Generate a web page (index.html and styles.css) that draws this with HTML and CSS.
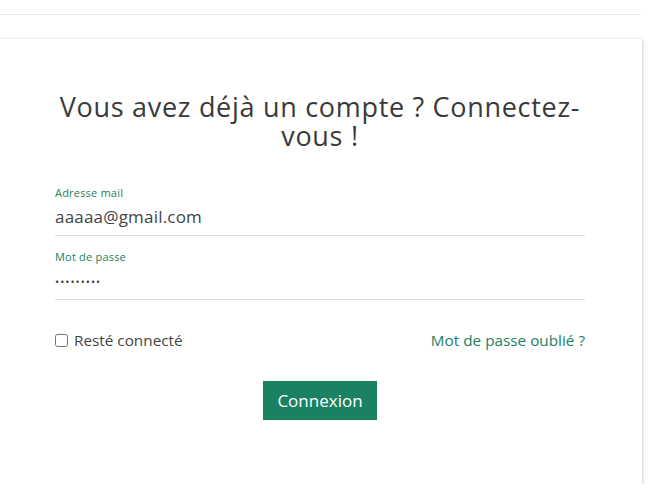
FILE: index.html
```html
<!DOCTYPE html>
<html lang="fr">
<head>
  <meta charset="UTF-8" />
  <meta name="viewport" content="width=device-width, initial-scale=1" />
  <title>Connexion</title>
  <link rel="stylesheet" href="styles.css">
</head>
<body>

  <div class="topbar"></div>

  <div class="card">
    <h1 class="title">Vous avez déjà un compte ? Connectez-vous !</h1>

    <form class="login-form">
      <div class="field">
        <label for="email">Adresse mail</label>
        <input id="email" type="email" value="aaaaa@gmail.com">
      </div>
      <div class="field">
        <label for="password">Mot de passe</label>
        <input id="password" type="password" value="aaaaaaaaa">
      </div>

      <div class="options">
        <label class="remember"><input type="checkbox"> Resté connecté</label>
        <a href="#" class="forgot">Mot de passe oublié ?</a>
      </div>

      <div class="actions">
        <button type="submit" class="btn-login">Connexion</button>
      </div>
    </form>
  </div>

</body>
</html>
```

FILE: styles.css
```css
* {
  box-sizing: border-box;
}
body {
  margin: 0;
  background: #fff;
  font-family: 'Open Sans', 'DejaVu Sans', sans-serif;
  color: #333;
}
.topbar {
  width: 641px;
  height: 15px;
  border-bottom: 1px solid #e9e9e9;
}
.card {
  width: 642px;
  margin-top: 24px;
  padding: 53px 57px 64px 55px;
  background: #fff;
  box-shadow: 0 1px 4px rgba(0, 0, 0, 0.3);
}
.title {
  margin: 0 0 35px;
  font-size: 27px;
  font-weight: 400;
  line-height: 29px;
  text-align: center;
  color: #3a3a3a;
  letter-spacing: 0.7px;
}
.field {
  margin-bottom: 13px;
}
.field label {
  display: block;
  font-size: 11px;
  letter-spacing: 0.2px;
  color: #1b8062;
  margin-bottom: 3px;
}
.field input {
  width: 100%;
  border: none;
  border-bottom: 1px solid #dcdcdc;
  padding: 2px 0 7px;
  font-family: inherit;
  font-size: 17px;
  letter-spacing: 0.2px;
  color: #444;
  outline: none;
  background: transparent;
}
.field input[type=password] {
  font-size: 11px;
  padding: 7px 0 10px;
  letter-spacing: 1px;
}
.options {
  display: flex;
  justify-content: space-between;
  align-items: center;
  margin-top: 30px;
  font-size: 15.3px;
}
.remember {
  display: flex;
  align-items: center;
  gap: 6px;
  color: #444;
}
.remember input {
  margin: 0;
  width: 13px;
  height: 13px;
}
.forgot {
  color: #1b8062;
  text-decoration: none;
}
.actions {
  display: flex;
  justify-content: center;
  margin-top: 31px;
}
.btn-login {
  background: #1b8163;
  color: #fff;
  border: none;
  padding: 8px 14px;
  font-family: inherit;
  font-size: 17px;
  cursor: pointer;
}
```
